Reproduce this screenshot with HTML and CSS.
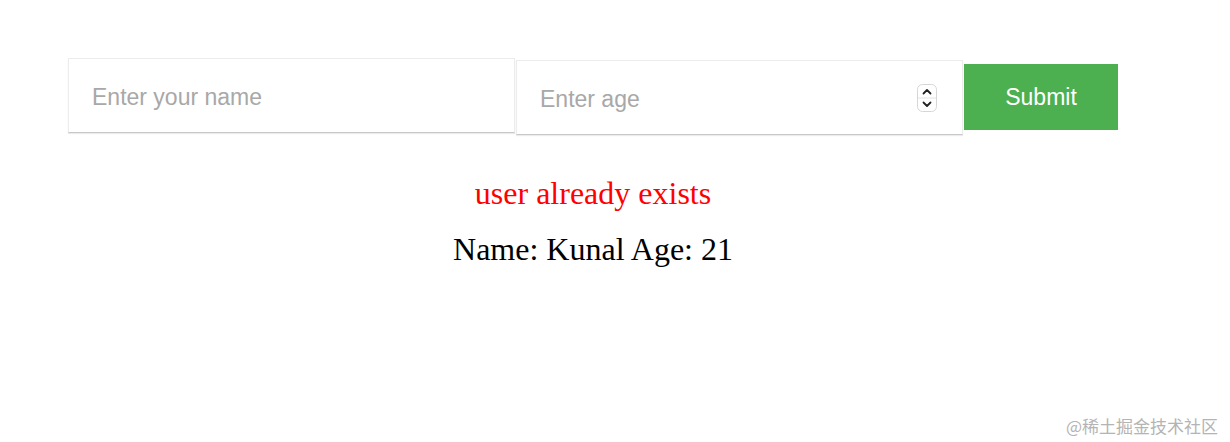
FILE: index.html
```html
<!DOCTYPE html>
<html>
<head>
<meta charset="utf-8">
<link rel="stylesheet" href="styles.css">
</head>
<body>
<div class="app">
  <form class="form">
    <input class="field field-name" type="text" placeholder="Enter your name">
    <div class="field field-age">
      <input class="age-input" type="text" placeholder="Enter age">
      <svg class="spinner" width="20" height="28" viewBox="0 0 20 28">
        <rect x="0.5" y="0.5" width="19" height="27" rx="5" fill="#fff" stroke="#d6d6d6"/>
        <line x1="1" y1="14" x2="19" y2="14" stroke="#e2e2e2"/>
        <path d="M6.5 9.5 L10 6 L13.5 9.5" fill="none" stroke="#222" stroke-width="1.8" stroke-linecap="round" stroke-linejoin="round"/>
        <path d="M6.5 18.5 L10 22 L13.5 18.5" fill="none" stroke="#222" stroke-width="1.8" stroke-linecap="round" stroke-linejoin="round"/>
      </svg>
    </div>
    <button class="submit" type="button">Submit</button>
  </form>
  <p class="error">user already exists</p>
  <p class="user">Name: Kunal Age: 21</p>
</div>
<div class="watermark">@稀土掘金技术社区</div>
</body>
</html>
```
FILE: styles.css
```css
html, body {
  margin: 0;
  padding: 0;
  background: #fff;
}
body {
  position: relative;
  width: 1230px;
  height: 442px;
  overflow: hidden;
  font-family: "Liberation Serif", "Times New Roman", serif;
}
.app {
  margin-left: 68px;
  width: 1050px;
  padding-top: 58px;
}
.form {
  display: flex;
  align-items: flex-start;
  margin: 0;
}
.field {
  box-sizing: border-box;
  width: 447px;
  height: 75px;
  border: 1px solid #ececec;
  border-bottom: 1px solid #c8c8c8;
  box-shadow: 0 1px 1px rgba(0, 0, 0, 0.08);
  background: #fff;
  font-family: "Liberation Sans", Arial, sans-serif;
  font-size: 23px;
  color: #333;
  outline: none;
}
.field-name {
  padding: 3px 0 0 23px;
  margin-right: 1px;
}
.field-age {
  margin-top: 2px;
  display: flex;
  align-items: center;
  padding: 0 25px 0 23px;
}
.age-input {
  flex: 1;
  min-width: 0;
  border: none;
  outline: none;
  padding: 0;
  margin-top: 4px;
  font-family: "Liberation Sans", Arial, sans-serif;
  font-size: 23px;
  background: transparent;
}
.spinner {
  flex: none;
  display: block;
  margin-top: 1px;
}
.field::placeholder,
.age-input::placeholder {
  color: #a8a8a8;
}
.submit {
  margin-top: 6px;
  margin-left: 1px;
  width: 154px;
  height: 66px;
  border: none;
  background: #4caf50;
  color: #fff;
  font-family: "Liberation Sans", Arial, sans-serif;
  font-size: 23px;
  cursor: pointer;
  padding: 0;
}
.error {
  margin: 40px 0 0;
  text-align: center;
  color: #ff0000;
  font-size: 32px;
  line-height: 36px;
}
.user {
  margin: 20px 0 0;
  text-align: center;
  color: #000;
  font-size: 32px;
  line-height: 36px;
}
.watermark {
  position: absolute;
  right: 12px;
  bottom: 4px;
  font-family: "Noto Sans CJK SC", sans-serif;
  font-size: 17px;
  color: #b4b4b4;
  line-height: 24px;
}
```
